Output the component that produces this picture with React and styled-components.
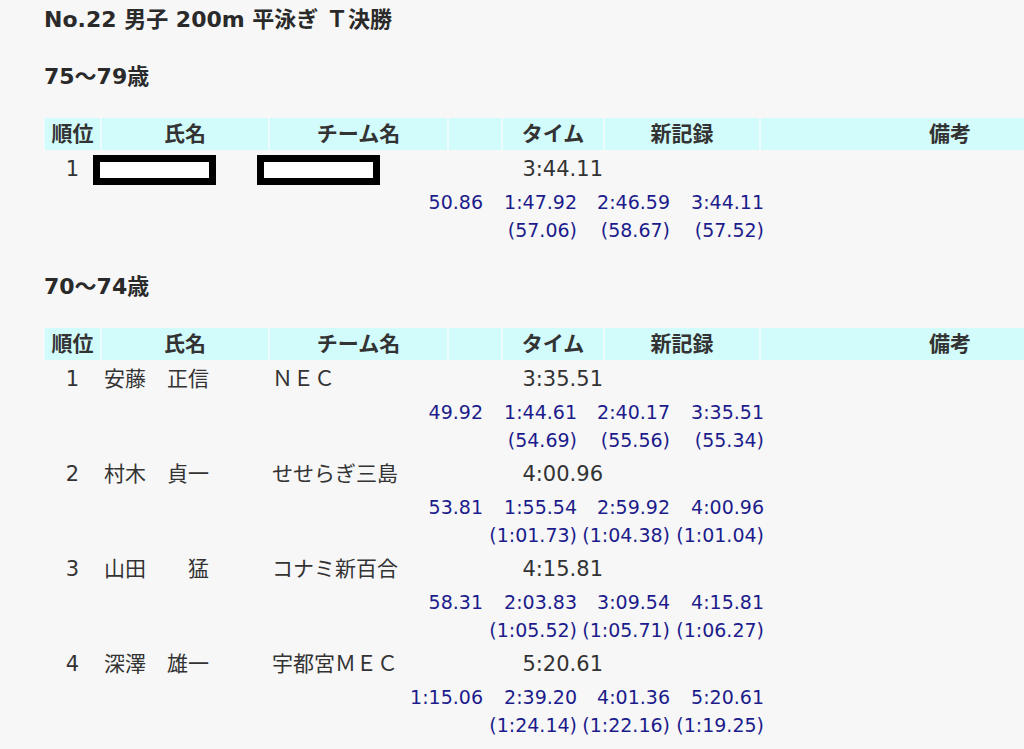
import React from "react";
import styled, { createGlobalStyle } from "styled-components";

const Global = createGlobalStyle`
  html, body {
    margin: 0;
    padding: 0;
    background: #f7f7f7;
    overflow: hidden;
  }
  body {
    font-family: "DejaVu Sans", "Noto Sans CJK JP", sans-serif;
    color: #333;
  }
`;

const Page = styled.div`
  padding: 5px 0 0 44px;
  width: 1200px;
`;

const Title = styled.h1`
  margin: 0;
  font-size: 22px;
  line-height: 30px;
  font-weight: bold;
  color: #2a2a2a;
`;

const Section = styled.section`
  margin-top: 27px;
`;

const AgeHeading = styled.h2`
  margin: 0 0 26px;
  font-size: 22px;
  line-height: 30px;
  font-weight: bold;
  color: #2a2a2a;
`;

const cols = "55px 166px 177px 52px 100px 154px 378px";

const HeaderRow = styled.div`
  display: grid;
  grid-template-columns: ${cols};
  column-gap: 2px;
  padding-left: 1px;
  background: #ecfbfb;
  height: 32px;
`;

const HeaderCell = styled.div`
  background: #d2fbfb;
  font-size: 21px;
  font-weight: bold;
  line-height: 32px;
  text-align: center;
  color: #333;
  white-space: nowrap;
`;

const Row = styled.div`
  position: relative;
  display: grid;
  grid-template-columns: ${cols};
  column-gap: 2px;
  padding-left: 1px;
  height: 36px;
  align-items: center;
  font-size: 21px;
`;

const Cell = styled.div`
  text-align: ${(p) => p.$align || "left"};
  padding-left: ${(p) => (p.$align === "left" || !p.$align ? "2px" : "0")};
  padding-top: 2px;
  white-space: pre;
  color: #333;
  line-height: 34px;
`;

const Redact = styled.div`
  position: absolute;
  top: 5px;
  left: ${(p) => p.$left}px;
  width: 123px;
  height: 30px;
  box-sizing: border-box;
  border: 7px solid #000;
  background: #fff;
`;

const SplitBlock = styled.div`
  margin-left: 345px;
  padding: 2px 0 1px;
  display: grid;
  grid-template-columns: 94px 94px 93px 94px;
  grid-auto-rows: 28px;
  align-items: center;
  font-size: 19px;
  color: #1c1c8c;
`;

const Split = styled.div`
  text-align: right;
  white-space: nowrap;
  line-height: 28px;
`;

const headers = ["順位", "氏名", "チーム名", "", "タイム", "新記録", "備考"];

const sections = [
  {
    age: "75〜79歳",
    rows: [
      {
        rank: "1",
        redacted: true,
        name: "",
        team: "",
        time: "3:44.11",
        splits: ["50.86", "1:47.92", "2:46.59", "3:44.11"],
        laps: ["", "(57.06)", "(58.67)", "(57.52)"],
      },
    ],
  },
  {
    age: "70〜74歳",
    rows: [
      {
        rank: "1",
        name: "安藤　正信",
        team: "ＮＥＣ",
        time: "3:35.51",
        splits: ["49.92", "1:44.61", "2:40.17", "3:35.51"],
        laps: ["", "(54.69)", "(55.56)", "(55.34)"],
      },
      {
        rank: "2",
        name: "村木　貞一",
        team: "せせらぎ三島",
        time: "4:00.96",
        splits: ["53.81", "1:55.54", "2:59.92", "4:00.96"],
        laps: ["", "(1:01.73)", "(1:04.38)", "(1:01.04)"],
      },
      {
        rank: "3",
        name: "山田　　猛",
        team: "コナミ新百合",
        time: "4:15.81",
        splits: ["58.31", "2:03.83", "3:09.54", "4:15.81"],
        laps: ["", "(1:05.52)", "(1:05.71)", "(1:06.27)"],
      },
      {
        rank: "4",
        name: "深澤　雄一",
        team: "宇都宮ＭＥＣ",
        time: "5:20.61",
        splits: ["1:15.06", "2:39.20", "4:01.36", "5:20.61"],
        laps: ["", "(1:24.14)", "(1:22.16)", "(1:19.25)"],
      },
    ],
  },
];

function Athlete({ r }) {
  return (
    <>
      <Row>
        <Cell $align="center">{r.rank}</Cell>
        <Cell>{r.name}</Cell>
        <Cell>{r.team}</Cell>
        <Cell />
        <Cell $align="right">{r.time}</Cell>
        <Cell />
        <Cell />
        {r.redacted && (
          <>
            <Redact $left={49} />
            <Redact $left={213} />
          </>
        )}
      </Row>
      <SplitBlock>
        {r.splits.map((s, i) => (
          <Split key={"s" + i}>{s}</Split>
        ))}
        {r.laps.map((s, i) => (
          <Split key={"l" + i}>{s}</Split>
        ))}
      </SplitBlock>
    </>
  );
}

export default function App() {
  return (
    <>
      <Global />
      <Page>
        <Title>No.22 男子 200m 平泳ぎ Ｔ決勝</Title>
        {sections.map((sec) => (
          <Section key={sec.age}>
            <AgeHeading>{sec.age}</AgeHeading>
            <HeaderRow>
              {headers.map((h, i) => (
                <HeaderCell key={i}>{h}</HeaderCell>
              ))}
            </HeaderRow>
            {sec.rows.map((r, i) => (
              <Athlete key={i} r={r} />
            ))}
          </Section>
        ))}
      </Page>
    </>
  );
}
